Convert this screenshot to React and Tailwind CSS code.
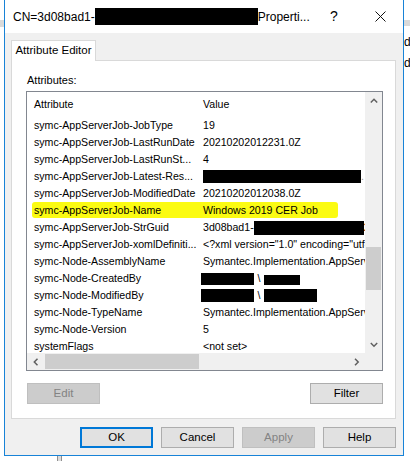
import React from "react";

const rows = [
  { a: "symc-AppServerJob-JobType", v: "19" },
  { a: "symc-AppServerJob-LastRunDate", v: "20210202012231.0Z" },
  { a: "symc-AppServerJob-LastRunSt...", v: "4" },
  { a: "symc-AppServerJob-Latest-Res...", kind: "latest" },
  { a: "symc-AppServerJob-ModifiedDate", v: "20210202012038.0Z" },
  { a: "symc-AppServerJob-Name", v: "Windows 2019 CER Job", hl: true },
  { a: "symc-AppServerJob-StrGuid", kind: "guid" },
  { a: "symc-AppServerJob-xomlDefiniti...", v: '<?xml version="1.0" encoding="utf-8"?>' },
  { a: "symc-Node-AssemblyName", v: "Symantec.Implementation.AppServer" },
  { a: "symc-Node-CreatedBy", kind: "created" },
  { a: "symc-Node-ModifiedBy", kind: "modified" },
  { a: "symc-Node-TypeName", v: "Symantec.Implementation.AppServer" },
  { a: "symc-Node-Version", v: "5" },
  { a: "systemFlags", v: "<not set>" },
];

function Chevron({ dir }) {
  const pts = {
    up: "0.8,4.5 4,1.3 7.2,4.5",
    down: "0.8,1 4,4.2 7.2,1",
    left: "4.5,0.8 1.3,4 4.5,7.2",
    right: "1,0.8 4.2,4 1,7.2",
  }[dir];
  const vertical = dir === "up" || dir === "down";
  return (
    <svg width={vertical ? 8 : 6} height={vertical ? 6 : 8} viewBox={vertical ? "0 0 8 6" : "0 0 6 8"}>
      <polyline points={pts} fill="none" stroke="#606060" strokeWidth="1.5" />
    </svg>
  );
}

function Value({ r }) {
  if (r.kind === "latest")
    return (
      <div className="flex items-center h-full">
        <div className="w-[158px] h-[13px] bg-black" />
        <span className="text-[#999]">.</span>
      </div>
    );
  if (r.kind === "guid")
    return (
      <div className="flex items-center h-full whitespace-nowrap">
        <span>3d08bad1-</span>
        <div className="w-[110px] h-[14px] bg-black shrink-0" />
        <span>2</span>
      </div>
    );
  if (r.kind === "created")
    return (
      <div className="flex items-center h-full whitespace-nowrap">
        <div className="w-[53px] h-[12px] bg-black shrink-0 -ml-[2px]" />
        <span className="w-[10px] text-center">\</span>
        <div className="w-[36px] h-[10px] bg-black shrink-0 mt-[2px]" />
      </div>
    );
  if (r.kind === "modified")
    return (
      <div className="flex items-center h-full whitespace-nowrap">
        <div className="w-[53px] h-[13px] bg-black shrink-0 -ml-[2px]" />
        <span className="w-[10px] text-center">\</span>
        <div className="w-[53px] h-[13px] bg-black shrink-0" />
      </div>
    );
  return <span className="whitespace-nowrap">{r.v}</span>;
}

function Btn({ children, disabled, primary, className = "" }) {
  let cls = "bg-[#e1e1e1] border border-[#adadad] text-black";
  if (disabled) cls = "bg-[#cccccc] border border-[#bfbfbf] text-[#838383]";
  if (primary) cls = "bg-[#e1e1e1] border-2 border-[#0078d7] text-black";
  return (
    <div className={`w-[73px] h-[21px] flex items-center justify-center text-[11.5px] box-border ${cls} ${className}`}>
      {children}
    </div>
  );
}

export default function App() {
  return (
    <div
      className="relative w-[410px] h-[461px] bg-white overflow-hidden text-black"
      style={{ fontFamily: '"Liberation Sans", Arial, sans-serif' }}
    >
      {/* desktop behind */}
      <div className="absolute left-0 top-[20px] w-[4px] h-[7px] bg-[#dadada]" />
      <div className="absolute left-[404px] top-[20px] w-[6px] h-[6px] bg-[#dadada]" />
      <div className="absolute left-[404px] top-[35px] text-[12px] leading-[14px]">d</div>
      <div className="absolute left-[404px] top-[56px] text-[12px] leading-[14px]">d</div>
      <div className="absolute left-[57px] top-[456px] w-[5px] h-[5px] border-x border-[#8f8f8f] bg-[#dcdcdc]" />

      {/* window */}
      <div className="absolute left-[4px] top-0 w-[400px] h-[456px] border-x border-b border-[#1883d7] flex flex-col bg-[#f0f0f0]">
        {/* title bar */}
        <div className="h-[33px] bg-white flex items-center shrink-0">
          <div className="pl-[8px] flex items-center text-[12px] whitespace-nowrap">
            <span>CN=3d08bad1-</span>
            <div className="w-[163px] h-[17px] bg-black" />
            <span>Properti...</span>
          </div>
          <div className="flex-1" />
          <div className="w-[46px] h-[33px] flex items-center justify-center text-[14px]">?</div>
          <div className="w-[46px] h-[33px] flex items-center justify-center">
            <svg width="11" height="11" viewBox="0 0 11 11">
              <path d="M0.5 0.5 L10.5 10.5 M10.5 0.5 L0.5 10.5" stroke="#111" strokeWidth="1" fill="none" />
            </svg>
          </div>
        </div>

        {/* body */}
        <div className="flex flex-col pl-[6px] pt-[7px]">
          {/* tab */}
          <div className="relative z-10 -mb-px w-[85px] h-[21px] bg-white border-t border-x border-[#d9d9d9] flex items-center justify-center text-[11.5px]">
            Attribute Editor
          </div>
          {/* panel */}
          <div className="w-[385px] h-[359px] box-border bg-white border border-[#d9d9d9] flex flex-col">
            <div className="ml-[15px] mt-[12px] h-[14px] leading-[14px] text-[11px]">Attributes:</div>
            {/* listbox */}
            <div className="ml-[14px] mt-[4px] w-[357px] h-[280px] box-border border border-[#828790] flex flex-col text-[10.6px]">
              <div className="flex h-[261px]">
                <div className="w-[338px] overflow-hidden flex flex-col">
                  <div className="h-[25px] shrink-0 flex items-center">
                    <div className="w-[169px] pl-[7px]">Attribute</div>
                    <div className="pl-[7px]">Value</div>
                  </div>
                  {rows.map((r, i) => (
                    <div key={i} className="relative h-[17px] shrink-0 flex items-center">
                      {r.hl && (
                        <div className="absolute left-[5px] top-[0px] w-[306px] h-[16px] bg-[#fbfb12] rounded-[3px]" />
                      )}
                      <div className="relative w-[169px] pl-[7px] whitespace-nowrap overflow-hidden shrink-0">{r.a}</div>
                      <div className="relative pl-[7px] h-full flex items-center overflow-hidden flex-1">
                        <Value r={r} />
                      </div>
                    </div>
                  ))}
                </div>
                {/* vertical scrollbar */}
                <div className="w-[17px] bg-[#f0f0f0] flex flex-col">
                  <div className="h-[17px] flex items-center justify-center"><Chevron dir="up" /></div>
                  <div className="h-[138px]" />
                  <div className="h-[43px] mx-[1px] bg-[#cdcdcd]" />
                  <div className="flex-1" />
                  <div className="h-[17px] flex items-center justify-center"><Chevron dir="down" /></div>
                </div>
              </div>
              {/* horizontal scrollbar */}
              <div className="flex h-[17px]">
                <div className="w-[338px] bg-[#f0f0f0] flex items-center">
                  <div className="w-[17px] h-[17px] flex items-center justify-center"><Chevron dir="left" /></div>
                  <div className="w-[154px] h-[15px] ml-[1px] bg-[#cdcdcd]" />
                  <div className="flex-1" />
                  <div className="w-[17px] h-[17px] flex items-center justify-center"><Chevron dir="right" /></div>
                </div>
                <div className="w-[17px] bg-[#f0f0f0]" />
              </div>
            </div>
            {/* edit/filter */}
            <div className="ml-[15px] mt-[12px] w-[356px] flex justify-between">
              <Btn disabled>Edit</Btn>
              <Btn>Filter</Btn>
            </div>
          </div>
        </div>

        {/* dialog buttons */}
        <div className="mt-[8px] flex justify-end gap-[8px] pr-[7px]">
          <Btn primary>OK</Btn>
          <Btn>Cancel</Btn>
          <Btn disabled>Apply</Btn>
          <Btn>Help</Btn>
        </div>
      </div>
    </div>
  );
}
